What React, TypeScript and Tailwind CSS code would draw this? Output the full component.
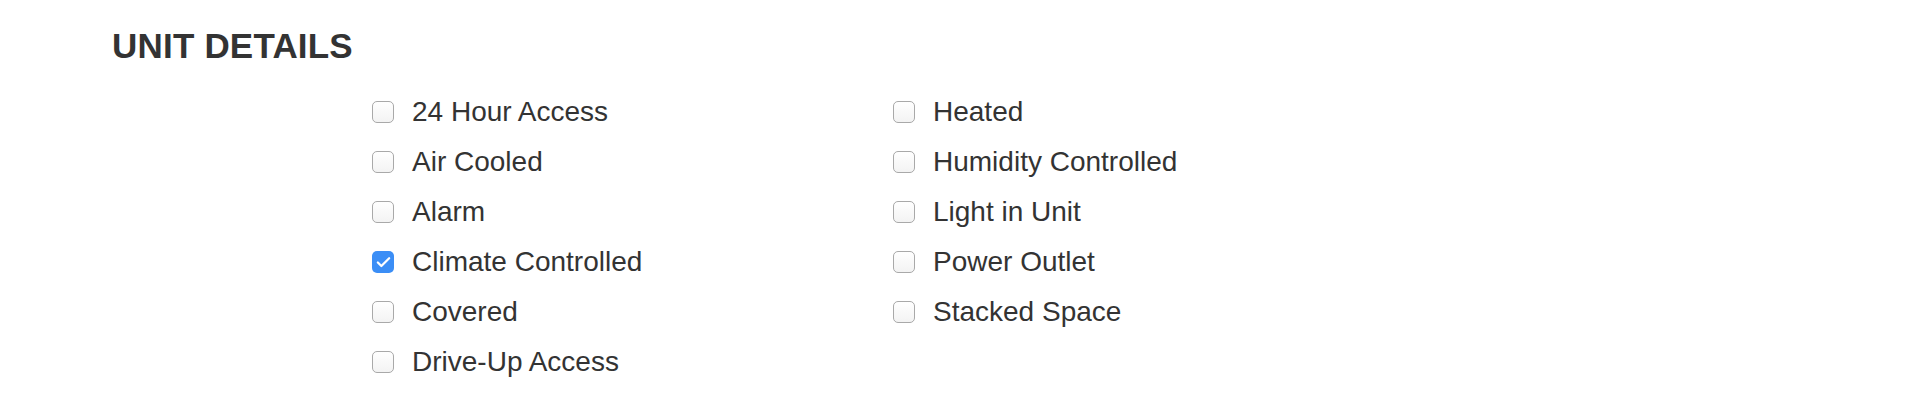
import { Check } from 'lucide-react';

const left = [
  { label: '24 Hour Access', checked: false },
  { label: 'Air Cooled', checked: false },
  { label: 'Alarm', checked: false },
  { label: 'Climate Controlled', checked: true },
  { label: 'Covered', checked: false },
  { label: 'Drive-Up Access', checked: false },
];

const right = [
  { label: 'Heated', checked: false },
  { label: 'Humidity Controlled', checked: false },
  { label: 'Light in Unit', checked: false },
  { label: 'Power Outlet', checked: false },
  { label: 'Stacked Space', checked: false },
];

function Option({ label, checked }: { label: string; checked: boolean }) {
  return (
    <label className="flex items-center h-[50px] gap-[18px]">
      {checked ? (
        <span className="w-[22px] h-[22px] rounded-[5px] bg-[#3b8ef6] flex items-center justify-center">
          <Check className="w-[17px] h-[17px] text-white" strokeWidth={3.2} />
        </span>
      ) : (
        <span className="w-[22px] h-[22px] rounded-[5px] border-[1.5px] border-[#a9a9a9] bg-gradient-to-b from-white to-[#f3f3f3]" />
      )}
      <span className="text-[28px] leading-[50px] text-[#333333]">{label}</span>
    </label>
  );
}

export default function App() {
  return (
    <div className="w-[1914px] h-[400px] bg-white pl-[112px] pt-[26px] font-['Liberation_Sans',Arial,sans-serif]">
      <h2 className="text-[35px] leading-[40px] font-bold text-[#333333] tracking-[0.2px]">UNIT DETAILS</h2>
      <div className="flex ml-[260px] mt-[21px]">
        <div className="flex flex-col w-[521px]">
          {left.map((o) => (
            <Option key={o.label} {...o} />
          ))}
        </div>
        <div className="flex flex-col">
          {right.map((o) => (
            <Option key={o.label} {...o} />
          ))}
        </div>
      </div>
    </div>
  );
}
